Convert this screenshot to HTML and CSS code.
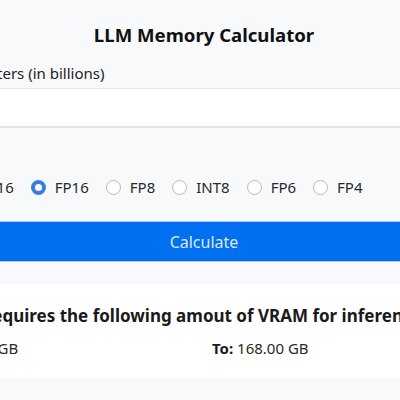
FILE: index.html
```html
<!DOCTYPE html>
<html>
<head>
<meta charset="utf-8">
<link rel="stylesheet" href="styles.css">
</head>
<body>
<main class="app">
  <h1 class="title">LLM Memory Calculator</h1>
  <div class="field">
    <label class="label" for="params">Number of parameters (in billions)</label>
    <input class="input" id="params" type="text" value="">
  </div>
  <div class="field precision">
    <span class="label label-hidden">Precision</span>
    <div class="radios">
      <label class="radio"><span class="dot"></span>FP32</label>
      <label class="radio"><span class="dot"></span>BF16</label>
      <label class="radio"><span class="dot checked"></span>FP16</label>
      <label class="radio"><span class="dot"></span>FP8</label>
      <label class="radio"><span class="dot"></span>INT8</label>
      <label class="radio"><span class="dot"></span>FP6</label>
      <label class="radio"><span class="dot"></span>FP4</label>
    </div>
  </div>
  <button class="btn">Calculate</button>
  <section class="card">
    <h2 class="card-title">The model requires the following amout of VRAM for inference:</h2>
    <div class="range">
      <div><b>From:</b> 140.00 GB</div>
      <div><b>To:</b> 168.00 GB</div>
    </div>
  </section>
</main>
</body>
</html>
```

FILE: styles.css
```css
html, body {
  margin: 0;
  padding: 0;
  background: #f8f9fb;
  overflow: hidden;
}
body {
  font-family: "Noto Sans", "Open Sans", sans-serif;
  color: #212529;
}
.app {
  width: 640px;
  margin-left: -116px;
  padding-top: 22px;
  display: flex;
  flex-direction: column;
}
.title {
  margin: 0;
  text-align: center;
  font-size: 18.6px;
  font-weight: 700;
  line-height: 26px;
  color: #111;
}
.field {
  display: flex;
  flex-direction: column;
}
.label {
  margin-top: 16px;
  margin-left: -22px;
  font-size: 15px;
  line-height: 18px;
  color: #222;
}
.input {
  margin-top: 6px;
  height: 40px;
  box-sizing: border-box;
  border: none;
  border-top: 1px solid #e6e8eb;
  border-bottom: 2px solid #e2e4e7;
  background: #fff;
  font: inherit;
  padding: 0 12px;
  outline: none;
}
.label-hidden {
  margin-top: 14px;
  visibility: hidden;
}
.radios {
  margin-top: 15px;
  margin-left: -4px;
  display: flex;
  align-items: center;
  gap: 17px;
  height: 24px;
}
.radio {
  display: flex;
  align-items: center;
  gap: 9px;
  font-size: 15px;
  color: #2a2a2a;
}
.dot {
  width: 15px;
  height: 15px;
  box-sizing: border-box;
  border-radius: 50%;
  border: 1px solid #b9b9b9;
  background: #fff;
}
.dot.checked {
  border: 4.5px solid #3b7be0;
  background: #fff;
}
.btn {
  margin-top: 22px;
  height: 41px;
  border: none;
  border-top: 1px solid #a9c9f2;
  border-bottom: 1px solid #a9c9f2;
  background: #0070f0;
  color: #dce8fb;
  font-family: inherit;
  font-size: 16px;
}
.card {
  margin-top: 22px;
  padding: 20px 8px 18px;
  background: #fff;
  box-shadow: 0 1px 2px rgba(0,0,0,0.12);
}
.card-title {
  margin: 0;
  font-size: 17px;
  font-weight: 700;
  line-height: 24px;
  color: #1a1a1a;
  white-space: nowrap;
}
.range {
  margin-top: 9px;
  padding-left: 8px;
  display: grid;
  grid-template-columns: 1fr 1fr;
  column-gap: 8px;
  font-size: 15px;
  line-height: 22px;
  color: #2a2a2a;
}
.range b {
  color: #1a1a1a;
}
```
